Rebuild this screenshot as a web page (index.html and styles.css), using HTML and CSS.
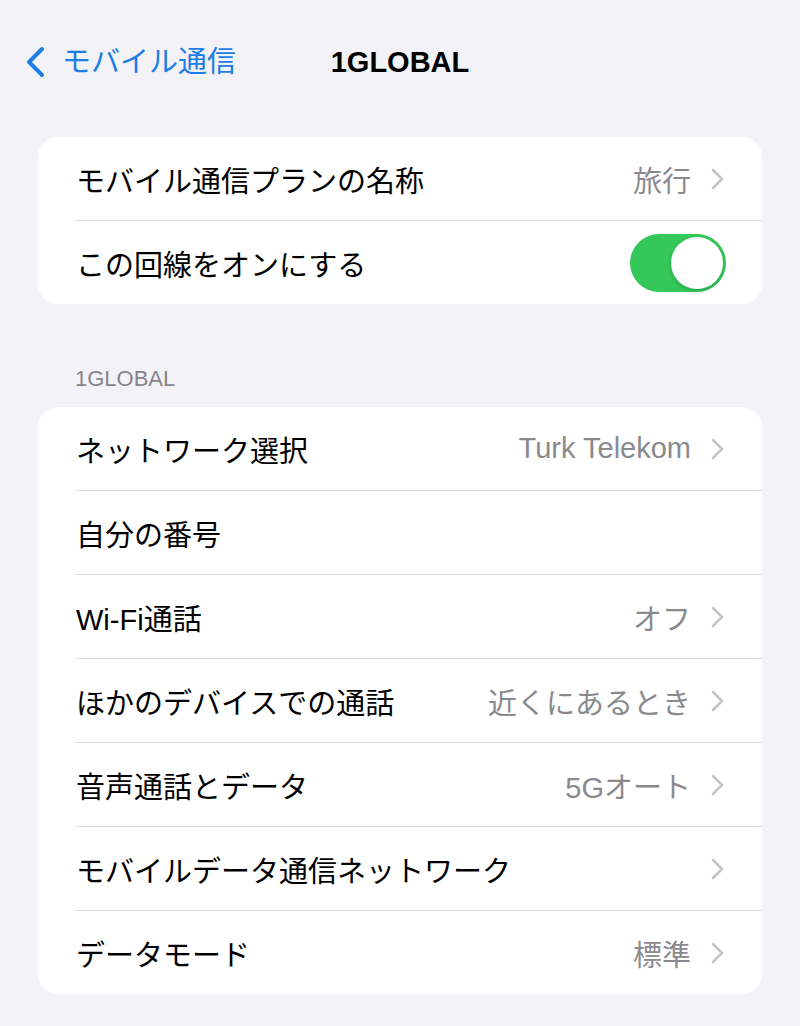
FILE: index.html
```html
<!DOCTYPE html>
<html lang="ja">
<head>
    <meta charset="UTF-8">
    <meta name="viewport" content="width=device-width, initial-scale=1.0">
    <title>1GLOBAL</title>
    <link rel="stylesheet" href="styles.css">
</head>
<body>
    <header class="nav">
        <a class="nav-back" href="#">
            <svg class="back-icon" width="22" height="32" viewBox="0 0 22 32">
                <path d="M18 3 L5 16 L18 29" fill="none" stroke="currentColor" stroke-width="4" stroke-linecap="round" stroke-linejoin="round"/>
            </svg>
            <span>モバイル通信</span>
        </a>
        <h1 class="nav-title">1GLOBAL</h1>
        <div></div>
    </header>

    <section class="card first">
        <div class="row">
            <div class="row-inner">
                <span class="label">モバイル通信プランの名称</span>
                <span class="value">旅行</span>
                <svg class="chevron" width="13" height="22" viewBox="0 0 13 22"><path d="M2 2 L11 11 L2 20" fill="none" stroke="currentColor" stroke-width="2.6" stroke-linecap="round" stroke-linejoin="round"/></svg>
            </div>
        </div>
        <div class="row">
            <div class="row-inner">
                <span class="label">この回線をオンにする</span>
                <span class="toggle on"><span class="knob"></span></span>
            </div>
        </div>
    </section>

    <h2 class="section-title">1GLOBAL</h2>

    <section class="card">
        <div class="row">
            <div class="row-inner">
                <span class="label">ネットワーク選択</span>
                <span class="value">Turk Telekom</span>
                <svg class="chevron" width="13" height="22" viewBox="0 0 13 22"><path d="M2 2 L11 11 L2 20" fill="none" stroke="currentColor" stroke-width="2.6" stroke-linecap="round" stroke-linejoin="round"/></svg>
            </div>
        </div>
        <div class="row">
            <div class="row-inner">
                <span class="label">自分の番号</span>
            </div>
        </div>
        <div class="row">
            <div class="row-inner">
                <span class="label">Wi-Fi通話</span>
                <span class="value">オフ</span>
                <svg class="chevron" width="13" height="22" viewBox="0 0 13 22"><path d="M2 2 L11 11 L2 20" fill="none" stroke="currentColor" stroke-width="2.6" stroke-linecap="round" stroke-linejoin="round"/></svg>
            </div>
        </div>
        <div class="row">
            <div class="row-inner">
                <span class="label">ほかのデバイスでの通話</span>
                <span class="value">近くにあるとき</span>
                <svg class="chevron" width="13" height="22" viewBox="0 0 13 22"><path d="M2 2 L11 11 L2 20" fill="none" stroke="currentColor" stroke-width="2.6" stroke-linecap="round" stroke-linejoin="round"/></svg>
            </div>
        </div>
        <div class="row">
            <div class="row-inner">
                <span class="label">音声通話とデータ</span>
                <span class="value">5Gオート</span>
                <svg class="chevron" width="13" height="22" viewBox="0 0 13 22"><path d="M2 2 L11 11 L2 20" fill="none" stroke="currentColor" stroke-width="2.6" stroke-linecap="round" stroke-linejoin="round"/></svg>
            </div>
        </div>
        <div class="row">
            <div class="row-inner">
                <span class="label">モバイルデータ通信ネットワーク</span>
                <svg class="chevron" width="13" height="22" viewBox="0 0 13 22"><path d="M2 2 L11 11 L2 20" fill="none" stroke="currentColor" stroke-width="2.6" stroke-linecap="round" stroke-linejoin="round"/></svg>
            </div>
        </div>
        <div class="row">
            <div class="row-inner">
                <span class="label">データモード</span>
                <span class="value">標準</span>
                <svg class="chevron" width="13" height="22" viewBox="0 0 13 22"><path d="M2 2 L11 11 L2 20" fill="none" stroke="currentColor" stroke-width="2.6" stroke-linecap="round" stroke-linejoin="round"/></svg>
            </div>
        </div>
    </section>
</body>
</html>
```

FILE: styles.css
```css
body {
    margin: 0;
    background: #f2f2f7;
    font-family: "Liberation Sans", "Noto Sans CJK JP", sans-serif;
    color: #000;
}
.nav {
    display: grid;
    grid-template-columns: 1fr auto 1fr;
    align-items: center;
    height: 124px;
}
.nav-back {
    display: flex;
    align-items: center;
    gap: 16px;
    padding-left: 24px;
    color: #1c7ee6;
    text-decoration: none;
    font-size: 29px;
    line-height: 34px;
}
.back-icon {
    display: block;
}
.nav-title {
    margin: 0;
    font-size: 29px;
    font-weight: bold;
    line-height: 34px;
}
.card {
    margin: 0 38px;
    background: #fff;
    border-radius: 20px;
    overflow: hidden;
}
.card.first {
    margin-top: 13px;
}
.section-title {
    margin: 62px 0 15px;
    padding-left: 75px;
    font-size: 22px;
    font-weight: normal;
    line-height: 26px;
    color: #86868b;
}
.row {
    padding-left: 37px;
}
.row-inner {
    display: flex;
    align-items: center;
    height: 83px;
    padding-right: 38px;
    border-bottom: 1px solid #dcdce0;
}
.row:last-child .row-inner {
    border-bottom: none;
}
.label {
    flex: 1;
    font-size: 29px;
    padding-left: 1px;
}
.value {
    font-size: 29px;
    color: #8a8a8e;
    margin-right: 20px;
}
.chevron {
    display: block;
    color: #c4c4c7;
}
.toggle {
    position: relative;
    width: 96px;
    height: 58px;
    border-radius: 29px;
    background: #34c759;
    margin-right: -2px;
}
.toggle .knob {
    position: absolute;
    top: 3px;
    right: 3px;
    width: 52px;
    height: 52px;
    border-radius: 50%;
    background: #fff;
    box-shadow: 0 2px 4px rgba(0, 0, 0, 0.15);
}
```
